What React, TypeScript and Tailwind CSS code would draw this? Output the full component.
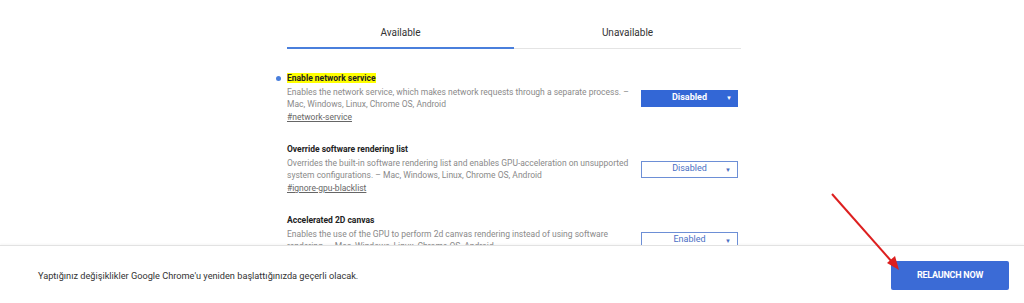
const FLAGS = [
  {
    title: 'Enable network service',
    desc: 'Enables the network service, which makes network requests through a separate process. – Mac, Windows, Linux, Chrome OS, Android',
    link: '#network-service',
    value: 'Disabled',
    changed: true,
  },
  {
    title: 'Override software rendering list',
    desc: 'Overrides the built-in software rendering list and enables GPU-acceleration on unsupported system configurations. – Mac, Windows, Linux, Chrome OS, Android',
    link: '#ignore-gpu-blacklist',
    value: 'Disabled',
    changed: false,
  },
  {
    title: 'Accelerated 2D canvas',
    desc: 'Enables the use of the GPU to perform 2d canvas rendering instead of using software rendering. – Mac, Windows, Linux, Chrome OS, Android',
    link: '#disable-accelerated-2d-canvas',
    value: 'Enabled',
    changed: false,
  },
];

function Select({ value, active }: { value: string; active: boolean }) {
  return (
    <div
      className={
        active
          ? 'relative w-[97px] h-[17px] bg-[#3367d6] text-white text-[9px] font-bold flex items-center justify-center'
          : 'relative w-[97px] h-[17px] bg-white border border-[#6d8fd6] text-[#4a6fc4] text-[9px] flex items-center justify-center'
      }
    >
      <span>{value}</span>
      <span className="absolute right-[6px] top-[3px] text-[6px] leading-[10px]">▼</span>
    </div>
  );
}

export default function App() {
  return (
    <div className="relative w-[1024px] h-[303px] bg-white flex flex-col overflow-hidden font-['Roboto',sans-serif]">
      <div className="flex-1 overflow-hidden pl-[287px]">
        <div className="w-[454px]">
          <div className="flex border-b border-[#e4e4e4] text-[10px] leading-[14px] text-[#333]">
            <div className="flex-1 text-center pt-[26px] pb-[7px] border-b-2 border-[#4a7fdc] -mb-px">Available</div>
            <div className="flex-1 text-center pt-[26px] pb-[8px]">Unavailable</div>
          </div>
          <div className="flex flex-col gap-[19px] pt-[23px]">
            {FLAGS.map((f) => (
              <div key={f.title} className="flex items-center">
                <div className="w-[354px] shrink-0 pr-[10px]">
                  <div className="relative text-[8.5px] leading-[12px] font-bold text-[#222] mb-[2px]">
                    {f.changed && (
                      <span className="absolute -left-[11px] top-[4px] w-[5px] h-[5px] rounded-full bg-[#4a7fdc]" />
                    )}
                    <span className={f.changed ? 'bg-[#ffff00]' : ''}>{f.title}</span>
                  </div>
                  <div className="text-[8.5px] leading-[12px] text-[#8a8a8a]">{f.desc}</div>
                  <div className="text-[8.5px] leading-[14px] text-[#666] underline">{f.link}</div>
                </div>
                <Select value={f.value} active={f.changed} />
              </div>
            ))}
          </div>
        </div>
      </div>
      <div className="h-[58px] shrink-0 border-t border-[#e2e2e2] bg-white flex items-center justify-between pl-[38px] pr-[15px] pt-[2px] shadow-[0_-1px_2px_rgba(0,0,0,0.04)]">
        <span className="text-[9.2px] text-[#333]">
          Yaptığınız değişiklikler Google Chrome'u yeniden başlattığınızda geçerli olacak.
        </span>
        <button className="w-[118px] h-[29px] rounded-[2px] bg-[#3b6bd6] text-white text-[9px] font-bold tracking-tight">
          RELAUNCH NOW
        </button>
      </div>
      <svg className="absolute inset-0 pointer-events-none" width="1024" height="303">
        <line x1="832" y1="194" x2="893" y2="263" stroke="#dd1f1f" strokeWidth="2" />
        <polygon points="899,270 887,263 895,256" fill="#dd1f1f" />
      </svg>
    </div>
  );
}
